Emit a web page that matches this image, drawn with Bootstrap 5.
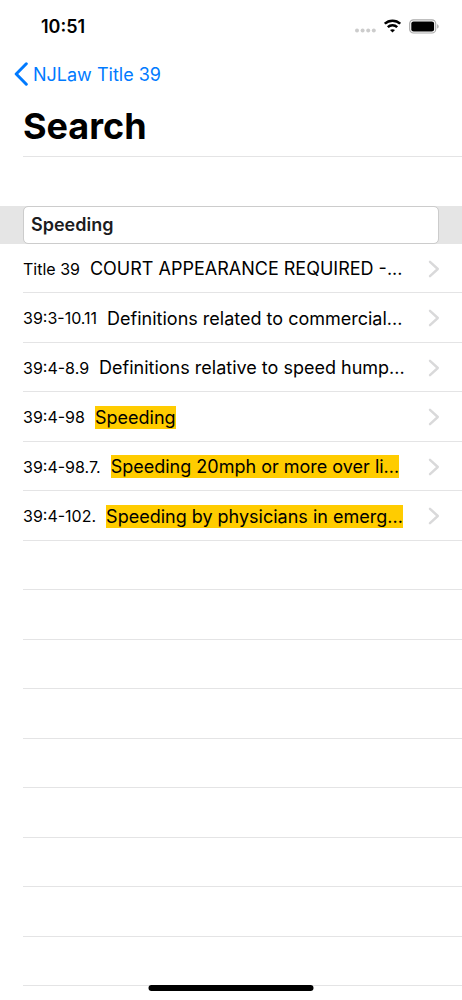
<!DOCTYPE html>
<html lang="en">
<head>
<meta charset="utf-8">
<meta name="viewport" content="width=device-width, initial-scale=1">
<title>Search</title>
<link href="https://cdn.jsdelivr.net/npm/bootstrap@5.3.0/dist/css/bootstrap.min.css" rel="stylesheet">
<style>
  body { font-family: Inter, "Liberation Sans", sans-serif; color: #000; background: #fff; }
  .status { height: 52px; padding: 0 23px 0 41px; font-size: 18px; font-weight: 600; }
  .signal { margin-top: 8px; }
  .back { height: 44px; padding-left: 14px; gap: 5px; font-size: 18px; color: #007aff; }
  .heading { height: 61px; margin-left: 23px; font-size: 36px; line-height: 60px; font-weight: 700; border-bottom: 1px solid #e4e4e5; }
  .search { margin-top: 49px; padding: 0 23px; background: #e5e5e5; }
  .search .form-control { height: 38px; padding: 0 7px 2px; font-size: 18px; font-weight: 600; color: #1c1c1e; border: 1px solid #ccc; border-radius: 5px; }
  .results { padding: 0 0 14px 23px; }
  .result { flex: 1 0 49px; border-bottom: 1px solid #e4e4e5; }
  .result a { gap: 10px; padding: 1px 22px 0 0; color: #000; }
  .code { font-size: 16px; }
  .topic { font-size: 18px; line-height: 23px; }
  .hit { background: #ffcc00; }
  .home { bottom: 9px; width: 165px; height: 6px; border-radius: 3px; background: #000; }
</style>
</head>
<body>
<div class="position-relative min-vh-100 d-flex flex-column">
  <header>
    <div class="status d-flex align-items-center justify-content-between">
      <span>10:51</span>
      <div class="d-flex align-items-center">
        <svg class="signal me-2" width="21" height="5" viewBox="0 0 21 5" fill="#ccc" aria-hidden="true"><circle cx="2" cy="2.5" r="2"/><circle cx="7.6" cy="2.5" r="2"/><circle cx="13.2" cy="2.5" r="2"/><circle cx="18.8" cy="2.5" r="2"/></svg>
        <svg class="me-2" width="17" height="14" viewBox="0 0 17 14" aria-hidden="true"><path d="M.8 4.7C5 .6 12 .6 16.2 4.7M3.8 8.1c2.6-2.5 6.8-2.5 9.4 0" fill="none" stroke="#000" stroke-width="2.5"/><path d="M8.5 13.6 6 11.1c1.4-1.3 3.6-1.3 5 0z"/></svg>
        <svg width="30" height="15" viewBox="0 0 30 15" aria-hidden="true"><rect x=".7" y=".8" width="26" height="13.2" rx="3.8" fill="#fff" stroke="#aaa" stroke-width="1.2"/><rect x="2.3" y="2.4" width="22.8" height="10" rx="2.2"/><path d="M28.2 5.2c1.9.7 1.9 3.7 0 4.4z" fill="#aaa"/></svg>
      </div>
    </div>
    <nav>
      <a class="back d-inline-flex align-items-center text-decoration-none" href="#">
        <svg width="14" height="24" viewBox="0 0 14 24" fill="none" stroke="#007aff" stroke-width="3" stroke-linecap="round" stroke-linejoin="round" aria-hidden="true"><path d="M12.3 1.8 2.2 12l10.1 10.2"/></svg>
        <span>NJLaw Title 39</span>
      </a>
    </nav>
    <h1 class="heading mb-0">Search</h1>
  </header>
  <form class="search">
    <input class="form-control" type="text" aria-label="Search" value="Speeding">
  </form>
  <svg class="d-none" aria-hidden="true"><symbol id="chevron" viewBox="0 0 12 18"><path d="M2 1.8 9.8 9 2 16.2" fill="none" stroke="#d9d9da" stroke-width="2.4" stroke-linecap="round" stroke-linejoin="round"/></symbol></svg>
  <ul class="results list-unstyled mb-0 flex-grow-1 d-flex flex-column">
    <li class="result"><a href="#" class="h-100 d-flex align-items-center text-decoration-none text-nowrap"><span class="code">Title 39</span><span class="topic">COURT APPEARANCE REQUIRED -...</span><svg class="ms-auto flex-shrink-0" width="12" height="18"><use href="#chevron"/></svg></a></li>
    <li class="result"><a href="#" class="h-100 d-flex align-items-center text-decoration-none text-nowrap"><span class="code">39:3-10.11</span><span class="topic">Definitions related to commercial...</span><svg class="ms-auto flex-shrink-0" width="12" height="18"><use href="#chevron"/></svg></a></li>
    <li class="result"><a href="#" class="h-100 d-flex align-items-center text-decoration-none text-nowrap"><span class="code">39:4-8.9</span><span class="topic">Definitions relative to speed hump...</span><svg class="ms-auto flex-shrink-0" width="12" height="18"><use href="#chevron"/></svg></a></li>
    <li class="result"><a href="#" class="h-100 d-flex align-items-center text-decoration-none text-nowrap"><span class="code">39:4-98</span><span class="topic hit">Speeding</span><svg class="ms-auto flex-shrink-0" width="12" height="18"><use href="#chevron"/></svg></a></li>
    <li class="result"><a href="#" class="h-100 d-flex align-items-center text-decoration-none text-nowrap"><span class="code">39:4-98.7.</span><span class="topic hit">Speeding 20mph or more over li...</span><svg class="ms-auto flex-shrink-0" width="12" height="18"><use href="#chevron"/></svg></a></li>
    <li class="result"><a href="#" class="h-100 d-flex align-items-center text-decoration-none text-nowrap"><span class="code">39:4-102.</span><span class="topic hit">Speeding by physicians in emerg...</span><svg class="ms-auto flex-shrink-0" width="12" height="18"><use href="#chevron"/></svg></a></li>
    <li class="result"></li>
    <li class="result"></li>
    <li class="result"></li>
    <li class="result"></li>
    <li class="result"></li>
    <li class="result"></li>
    <li class="result"></li>
    <li class="result"></li>
    <li class="result"></li>
  </ul>
  <div class="home position-absolute start-50 translate-middle-x"></div>
</div>
<script src="https://cdn.jsdelivr.net/npm/bootstrap@5.3.0/dist/js/bootstrap.bundle.min.js"></script>
</body>
</html>
